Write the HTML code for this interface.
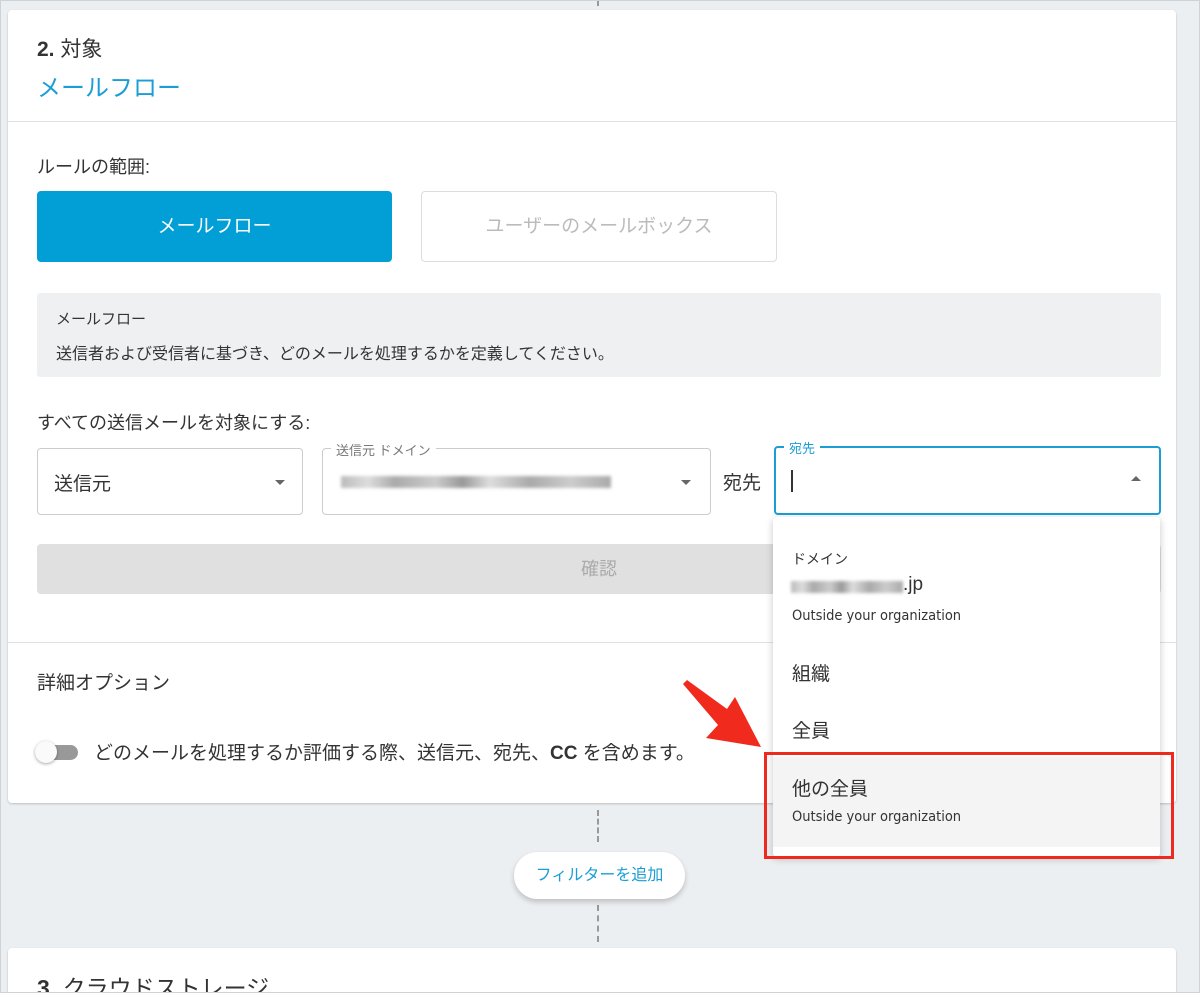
<!DOCTYPE html>
<html><head><meta charset="utf-8"><style>
*{box-sizing:border-box;margin:0;padding:0}
html,body{width:1200px;height:993px;overflow:hidden}
body{background:#eceff2;font-family:"Liberation Sans","Noto Sans CJK JP",sans-serif;color:#333;position:relative}
.a{position:absolute;white-space:nowrap}
.card{position:absolute;left:8px;width:1168px;background:#fff;border-radius:4px;box-shadow:0 1px 2px rgba(0,0,0,.2)}
.dash{position:absolute;left:597px;width:0;border-left:2px dashed #999}
.sel{position:absolute;border:1px solid #ccc;border-radius:4px;background:#fff}
.tri{position:absolute;width:0;height:0;border-left:5px solid transparent;border-right:5px solid transparent;border-top:5px solid #666}
.blur{position:absolute;height:12px;background:linear-gradient(90deg,#bbb,#ddd 10%,#aaa 20%,#ccc 35%,#999 45%,#ddd 55%,#aaa 70%,#ccc 85%,#aaa);filter:blur(1.5px)}
.en{font-family:'DejaVu Sans Condensed','DejaVu Sans',sans-serif}
</style></head><body>
<div style="position:absolute;inset:0;border:1px solid #cfd3d6;pointer-events:none;z-index:9"></div>
<div class="dash" style="top:0;height:6px"></div>
<div class="card" style="top:10px;height:793px">
  <div class="a" style="left:29px;top:23px;font-size:21px;color:#333"><b>2.</b> 対象</div>
  <div class="a" style="left:29px;top:58px;font-size:24px;color:#1b9ed6">メールフロー</div>
  <div style="position:absolute;left:0;right:0;top:111px;border-top:1px solid #e2e2e2"></div>
  <div class="a" style="left:29px;top:143px;font-size:18px">ルールの範囲:</div>
  <div class="a" style="left:29px;top:181px;width:355px;height:71px;background:#029fd6;border-radius:4px;color:#fff;font-size:19px;text-align:center;line-height:71px">メールフロー</div>
  <div class="a" style="left:413px;top:181px;width:356px;height:71px;border:1px solid #ddd;border-radius:4px;color:#bbb;font-size:19px;text-align:center;line-height:69px">ユーザーのメールボックス</div>
  <div class="a" style="left:29px;top:283px;width:1124px;height:84px;background:#eef0f2;border-radius:3px"></div>
  <div class="a" style="left:48px;top:298px;font-size:15px">メールフロー</div>
  <div class="a" style="left:48px;top:330px;font-size:16px">送信者および受信者に基づき、どのメールを処理するかを定義してください。</div>
  <div class="a" style="left:29px;top:399px;font-size:18px">すべての送信メールを対象にする:</div>
  <div class="sel" style="left:29px;top:438px;width:266px;height:67px"><div class="a" style="left:16px;top:20px;font-size:19px">送信元</div><div class="tri" style="left:237px;top:31px"></div></div>
  <div class="sel" style="left:314px;top:438px;width:389px;height:67px"><div class="a" style="left:8px;top:-9px;font-size:13px;color:#777;background:#fff;padding:0 5px">送信元 ドメイン</div><div class="blur" style="left:18px;top:27px;width:270px"></div><div class="tri" style="left:358px;top:31px"></div></div>
  <div class="a" style="left:715px;top:458px;font-size:19px">宛先</div>
  <div class="sel" style="left:766px;top:436px;width:387px;height:69px;border:2px solid #1b9ed6"><div class="a" style="left:8px;top:-10px;font-size:13px;color:#1b9ed6;background:#fff;padding:0 5px">宛先</div><div class="a" style="left:15px;top:22px;width:2px;height:22px;background:#333"></div><div class="tri" style="left:355px;top:28px;border-top:0;border-bottom:5px solid #666"></div></div>
  <div class="a" style="left:29px;top:534px;width:1124px;height:50px;background:#e0e0e0;border-radius:4px;color:#aaa;font-size:18px;text-align:center;line-height:50px">確認</div>
  <div style="position:absolute;left:0;right:0;top:632px;border-top:1px solid #e2e2e2"></div>
  <div class="a" style="left:29px;top:658px;font-size:19px">詳細オプション</div>
  <div class="a" style="left:32px;top:735px;width:38px;height:15px;background:#999;border-radius:8px"></div>
  <div class="a" style="left:27px;top:731px;width:22px;height:22px;background:#fafafa;border-radius:50%;box-shadow:0 1px 3px rgba(0,0,0,.35)"></div>
  <div class="a" style="left:86px;top:728px;font-size:19px">どのメールを処理するか評価する際、送信元、宛先、<b>CC</b> を含めます。</div>
</div>
<div class="dash" style="top:810px;height:32px"></div>
<div class="dash" style="top:905px;height:37px"></div>
<div class="a" style="left:514px;top:852px;width:171px;height:47px;background:#fff;border-radius:24px;box-shadow:0 3px 6px rgba(0,0,0,.2);color:#1b9ed6;font-size:16px;text-align:center;line-height:47px">フィルターを追加</div>
<div class="card" style="top:948px;height:45px;border-radius:4px 4px 0 0">
  <div class="a" style="left:29px;top:21px;font-size:23px"><b>3.</b> クラウドストレージ</div>
</div>
<div class="a" style="left:773px;top:517px;width:387px;height:340px;background:#fff;border-radius:4px;box-shadow:0 2px 8px rgba(0,0,0,.22);overflow:hidden">
  <div class="a" style="left:19px;top:32px;font-size:14px">ドメイン</div>
  <div class="blur" style="left:18px;top:64px;width:112px"></div>
  <div class="a" style="left:130px;top:57px;font-size:19px">.jp</div>
  <div class="a en" style="left:19px;top:91px;font-size:14.5px">Outside your organization</div>
  <div class="a" style="left:19px;top:142px;font-size:19px">組織</div>
  <div class="a" style="left:19px;top:199px;font-size:19px">全員</div>
  <div class="a" style="left:0;top:240px;width:387px;height:90px;background:#f4f4f4"></div>
  <div class="a" style="left:19px;top:257px;font-size:19px">他の全員</div>
  <div class="a en" style="left:19px;top:292px;font-size:14.5px">Outside your organization</div>
</div>
<div class="a" style="left:764px;top:752px;width:410px;height:107px;border:3px solid #ee2a1f"></div>
<svg class="a" style="left:675px;top:675px" width="95" height="80" viewBox="0 0 95 80"><path d="M8 9 L12 5 L52 34 L60 22 L86 72 L31 63 L43 50 Z" fill="#f02a1c"/></svg>
</body></html>
